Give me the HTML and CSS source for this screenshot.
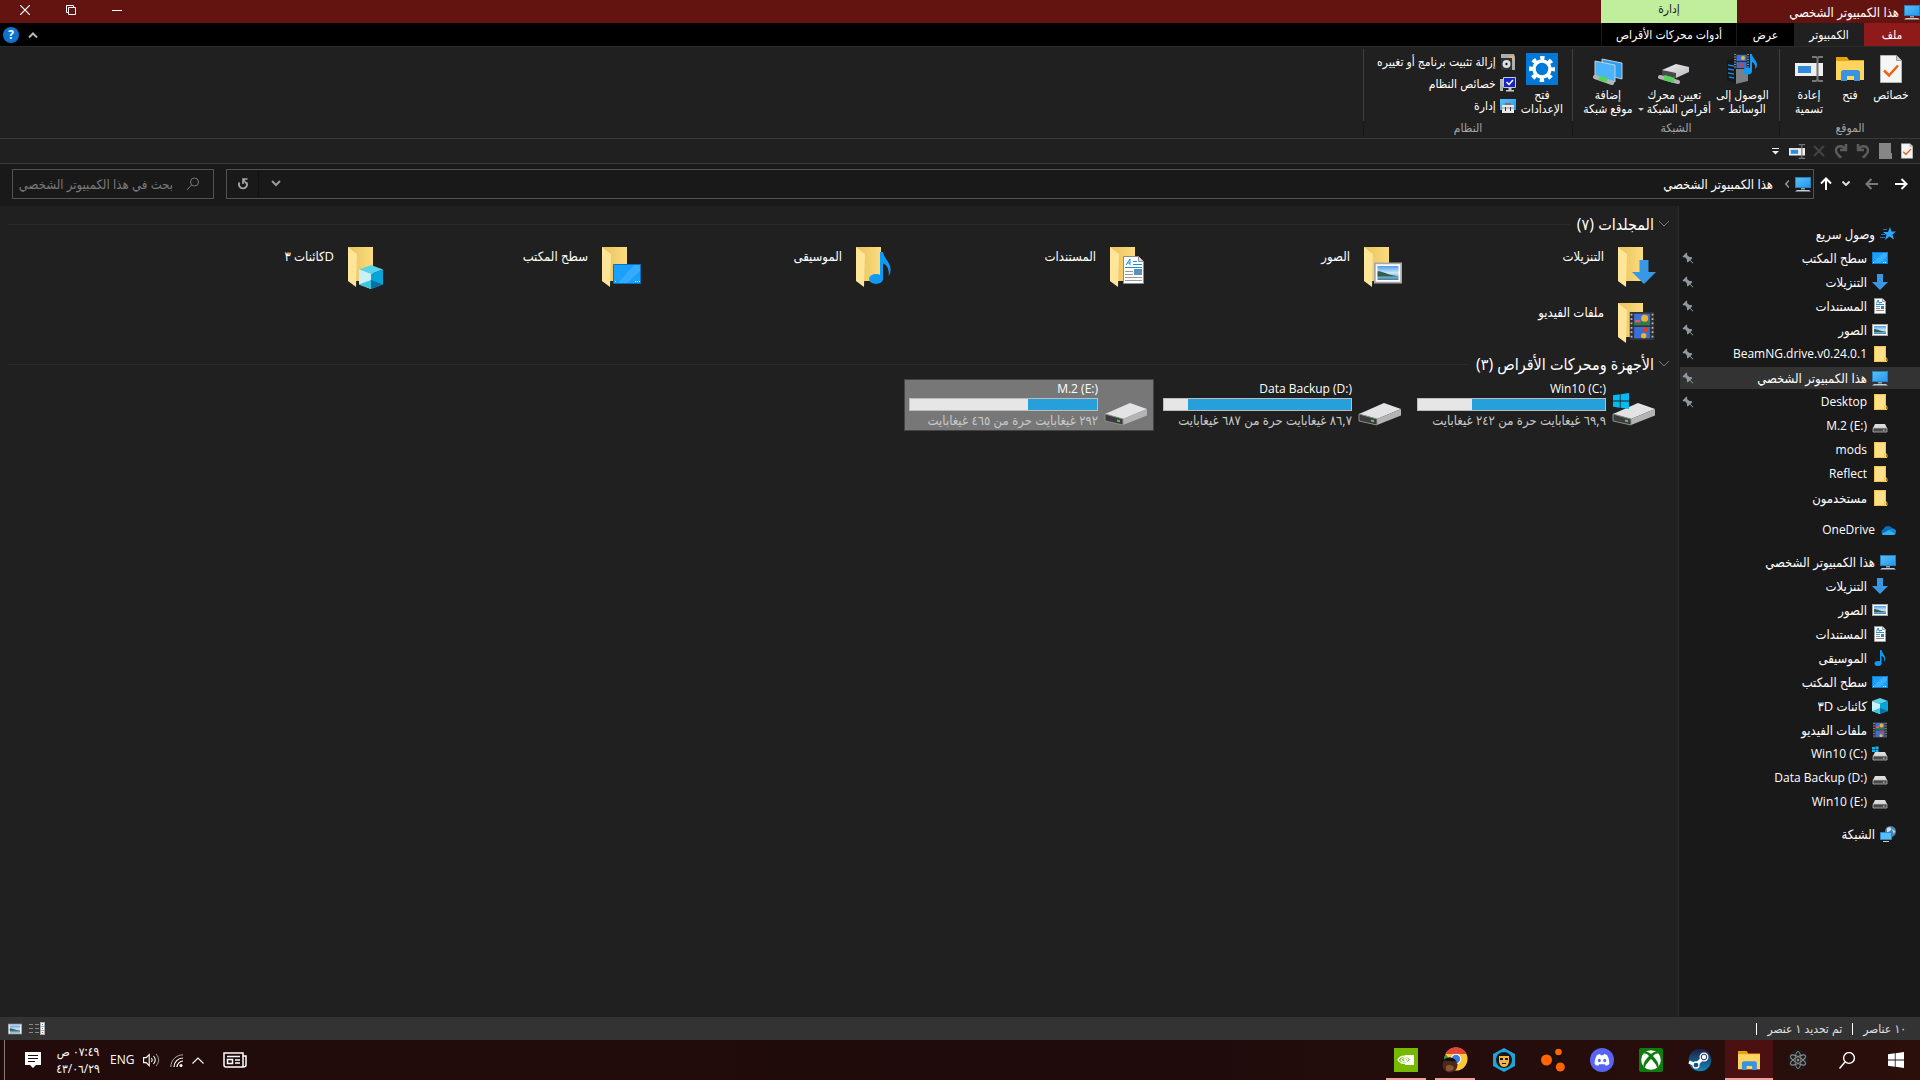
FILE: index.html
```
<!DOCTYPE html>
<html lang="ar" dir="rtl">
<head>
    <meta charset="UTF-8">
    <meta name="viewport" content="width=device-width, initial-scale=1.0">
    <title>هذا الكمبيوتر الشخصي</title>
    <link rel="stylesheet" href="styles.css">
</head>
<body>
    <!-- icon sprite -->
    <svg class="sprite" aria-hidden="true">
        <defs>
            <linearGradient id="screen" x1="0" y1="0" x2="1" y2="1">
                <stop offset="0" stop-color="#5cc0f8"/>
                <stop offset="1" stop-color="#2196ee"/>
            </linearGradient>
            <linearGradient id="sky" x1="0" y1="0" x2="0" y2="1">
                <stop offset="0" stop-color="#4d9df0"/>
                <stop offset="0.5" stop-color="#cfe8fa"/>
                <stop offset="1" stop-color="#3c7fa5"/>
            </linearGradient>
            <linearGradient id="gold" x1="0" y1="0" x2="1" y2="0">
                <stop offset="0" stop-color="#e9c25c"/>
                <stop offset="1" stop-color="#fbdc7f"/>
            </linearGradient>
            <linearGradient id="metal" x1="0" y1="0" x2="1" y2="1">
                <stop offset="0" stop-color="#f0f0f2"/>
                <stop offset="1" stop-color="#b9b9bc"/>
            </linearGradient>
            <linearGradient id="steam-bg" x1="0" y1="0" x2="0" y2="1">
                <stop offset="0" stop-color="#1b1f45"/>
                <stop offset="1" stop-color="#1585bd"/>
            </linearGradient>
        </defs>

        <symbol id="i-pc" viewBox="0 0 16 16">
            <rect x="0.5" y="1.5" width="15" height="10" fill="url(#screen)" stroke="#2a7fb8"/>
            <path d="M6 12h4v1.500H6z" fill="#8fa3b3"/>
            <path d="M2 14h12l2 1.500H0z" fill="#c3cdd6"/>
        </symbol>
        <symbol id="i-desktop" viewBox="0 0 16 16">
            <rect x="0.5" y="2.500" width="15" height="11" fill="#18a0fb" stroke="#0c7fd6"/>
            <path d="M1 13L11 3h4v3L8 13z" fill="#3aaefc"/>
            <path d="M1 12h1v1H1zM11 12h1v1h-1zM13 12h1v1h-1z" fill="#fff"/>
        </symbol>
        <symbol id="i-down" viewBox="0 0 16 16">
            <path d="M5 0h6v8h5l-8 8-8-8h5z" fill="#3798e5"/>
        </symbol>
        <symbol id="i-doc" viewBox="0 0 16 16">
            <path d="M2.500 0.500h8l3 3v12h-11z" fill="#fff" stroke="#9a9a9a"/>
            <path d="M10.500 0.500v3h3" fill="#ddd" stroke="#9a9a9a"/>
            <path d="M4 6.500h8M7.500 4.500H10" stroke="#1a8fe0"/>
            <path d="M4.500 5.500L6 2l1.500 3.500" fill="none" stroke="#1a8fe0"/>
            <path d="M4 8.500h4M4 10.500h4M4 12.500h8" stroke="#888"/>
            <path d="M9 8h3v3H9z" fill="#3c7fa5"/>
        </symbol>
        <symbol id="i-pic" viewBox="0 0 16 16">
            <rect x="0.5" y="2.500" width="15" height="11" fill="#fff" stroke="#a8a8a8"/>
            <rect x="2" y="4" width="12" height="8" fill="url(#sky)"/>
            <path d="M2 7c3 0 5 1.500 8 2.200L14 10H2z" fill="#2f5f4d"/>
        </symbol>
        <symbol id="i-folder" viewBox="0 0 16 16">
            <path d="M2 0h12v16H2z" fill="#ffe08a"/>
            <path d="M2.500 0.500h11v11l1.500 1v3H2.500z" fill="none" stroke="#f0c648"/>
            <path d="M12.500 11.500v4" stroke="#f0c648"/>
        </symbol>
        <symbol id="i-drive" viewBox="0 0 16 16">
            <path d="M3 6h10l2 4H1z" fill="#dcdcdc"/>
            <path d="M1 10h14v4H1z" fill="#4a4a4a" stroke="#b5b5b5" stroke-width="0.800"/>
            <path d="M11 11.500h1.500V13H11z" fill="#3fe06a"/>
        </symbol>
        <symbol id="i-drive-win" viewBox="0 0 16 16">
            <use href="#i-drive"/>
            <path d="M0 1h3v2H0zM3.500 .5h3v2.500h-3zM0 3.500h3v2.500H0zM3.500 3.500h3V6h-3z" fill="#12b5f0"/>
        </symbol>
        <symbol id="i-music" viewBox="0 0 16 16">
            <path d="M8 0h1.500c.3 3 3.800 5 3.800 9 0 1.500-.5 2.500-1 3 .5-3-.8-5.500-2.800-6.200v8H8z" fill="#0f9bf5"/>
            <ellipse cx="6" cy="13.500" rx="3.500" ry="2.500" fill="#0f9bf5"/>
        </symbol>
        <symbol id="i-cube" viewBox="0 0 16 16">
            <path d="M8 0l8 3-8 3-8-3z" fill="#58d3ea"/>
            <path d="M0 3l8 3v10l-8-3z" fill="#c9f1f5"/>
            <path d="M16 3L8 6v10l8-3z" fill="#08a5d8"/>
            <path d="M0 13l8-3v6z" fill="#3cc8dc"/>
            <path d="M16 13l-8-3v6z" fill="#0a6fa3"/>
        </symbol>
        <symbol id="i-film" viewBox="0 0 16 16">
            <path d="M1 0h14v16H1z" fill="#333"/>
            <path d="M3.500 1h9v6.500h-9zM3.500 8.500h9V15h-9z" fill="#3b6fd8"/>
            <path d="M3.500 5.500h9v2h-9z" fill="#2e7d44"/>
            <circle cx="9.500" cy="3.500" r="2" fill="#f0b429"/>
            <circle cx="10" cy="10" r="1.500" fill="#d8402b"/>
            <circle cx="9" cy="13.500" r="1.500" fill="#f0b429"/>
            <path d="M4 4.500h3v1.500H4z" fill="#e05a6a"/>
            <path d="M2 1v14M14 1v14" stroke="#bbb" stroke-dasharray="1 1.500"/>
        </symbol>
        <symbol id="i-star" viewBox="0 0 16 16">
            <path d="M10 1l1.500 4.500H16l-3.500 3 1.500 5-4.500-3L5 14l1.500-5L3 6h5z" fill="#2ea6f7"/>
            <path d="M3 3.500h4M1 8.500h4M0 11.500h5" stroke="#1878c4"/>
        </symbol>
        <symbol id="i-cloud" viewBox="0 0 16 16">
            <path d="M3.500 7a5 5 0 0 1 9-.5A4 4 0 0 1 16 10.500 3 3 0 0 1 13 13H3.500A3.200 3.200 0 0 1 3.500 7z" fill="#0f6cbd"/>
            <path d="M12.500 6.500A4 4 0 0 1 16 10.500L9 8z" fill="#1490df"/>
            <path d="M1.500 12L9 8l6.500 3.500A3 3 0 0 1 13 13H3.500z" fill="#2db3ea"/>
        </symbol>
        <symbol id="i-net" viewBox="0 0 16 16">
            <circle cx="10.500" cy="5.500" r="5.500" fill="#4a86b0"/>
            <path d="M7 2c3-2 5 0 4 2s-3 1-4 3zM12 3l3 2-1 3z" fill="#c5e2f2"/>
            <path d="M0.500 6.500h11v7h-11z" fill="#58bcf8" stroke="#2d87c4"/>
            <path d="M3 15.500h6" stroke="#c3cdd6"/>
        </symbol>
        <symbol id="i-pin" viewBox="0 0 12 12">
            <path d="M4.500.5L.5 4.500l1 1 1.500-.3 2 2.300-.2 2 1 1 2-2 3 3 .6-.6-3-3 2-2-1-1-2 .2L5 3l.3-1.500z" fill="#8f98a0"/>
        </symbol>
        <symbol id="i-winlogo" viewBox="0 0 16 16">
            <path d="M0 2.300L6.800 1.300v6.200H0zM7.600 1.200L16 0v7.500H7.600zM0 8.400h6.800v6.300L0 13.700zM7.600 8.400H16V16l-8.400-1.200z"/>
        </symbol>
        <symbol id="i-check-doc" viewBox="0 0 22 28">
            <path d="M.5.5h16l5 5v22H.5z" fill="#f6f6f6" stroke="#b5b5b5"/>
            <path d="M16.500.5v5h5" fill="#ccc" stroke="#999"/>
            <path d="M4 15.500l5 5 9-10" fill="none" stroke="#f2600c" stroke-width="2.500"/>
        </symbol>
        <symbol id="i-rename" viewBox="0 0 28 26">
            <path d="M0 7h28v13H0z" fill="#efefef"/>
            <path d="M3 10h13v7H3z" fill="#2f8bdc"/>
            <path d="M17 1h4l1.500 1L24 1h4M17 25h4l1.500-1 1.500 1h4M22.500 2v22" fill="none" stroke="#777" stroke-width="2"/>
        </symbol>
        <symbol id="i-explorer" viewBox="0 0 28 24">
            <path d="M0 0h11l2 3h15v20H0z" fill="#e5a50a"/>
            <path d="M0 4h28v19H0z" fill="#ffd560"/>
            <path d="M5 24V14.500L7 13h15l2 1.500V24h-6v-5h-7v5z" fill="#3893e0"/>
        </symbol>
        <symbol id="i-folder-back" viewBox="0 0 48 48">
            <path d="M8 4h25v34H8z" fill="url(#gold)"/>
            <path d="M8 4l9 7-1 33-8-6z" fill="#ffe598"/>
        </symbol>
        <symbol id="i-disk" viewBox="0 0 48 48">
            <path d="M3 34l25-11 17 6-24 10z" fill="#e3e3e6"/>
            <path d="M3 34l18 5v6L3 41z" fill="#3c3c3c"/>
            <path d="M21 39l24-10v6.500L21 45z" fill="#b4b4b6"/>
            <path d="M3 34l18 5v6L3 41z" fill="none" stroke="#8d8d8d"/>
            <path d="M15 39.500l3 .8v2l-3-.8z" fill="#37d84c"/>
        </symbol>
    </svg>

    <header class="titlebar">
        <div class="titlebar-text">
            <svg class="ic16"><use href="#i-pc"/></svg>
            <h1>هذا الكمبيوتر الشخصي</h1>
        </div>
        <div class="context-tab">إدارة</div>
        <div class="window-buttons">
            <button type="button" aria-label="تصغير"><svg width="10" height="10"><path d="M0 5.500h10" stroke="#fff"/></svg></button>
            <button type="button" aria-label="استعادة"><svg width="10" height="10" fill="none" stroke="#fff"><path d="M2.500 2.500h7v7h-7z"/><path d="M2 7.500H.5v-7h7V2"/></svg></button>
            <button type="button" aria-label="إغلاق"><svg width="10" height="10"><path d="M0 0l10 10M10 0L0 10" stroke="#fff" stroke-width="1.200"/></svg></button>
        </div>
    </header>

    <nav class="tabs">
        <button type="button" class="tab tab-file">ملف</button>
        <button type="button" class="tab tab-active">الكمبيوتر</button>
        <button type="button" class="tab tab-view">عرض</button>
        <button type="button" class="tab tab-tools">أدوات محركات الأقراص</button>
        <div class="tabs-end">
            <button type="button" aria-label="طي الشريط"><svg width="10" height="6"><path d="M1 5.500l4-4 4 4" fill="none" stroke="#b5b5b5" stroke-width="2"/></svg></button>
            <button type="button" class="help" aria-label="تعليمات">?</button>
        </div>
    </nav>

    <section class="ribbon">
        <div class="group group-location">
            <div class="group-items">
                <button type="button" class="big">
                    <span class="big-icon"><svg width="22" height="28"><use href="#i-check-doc"/></svg></span>
                    <span>خصائص</span>
                </button>
                <button type="button" class="big">
                    <span class="big-icon"><svg width="28" height="24"><use href="#i-explorer"/></svg></span>
                    <span>فتح</span>
                </button>
                <button type="button" class="big">
                    <span class="big-icon"><svg width="28" height="26"><use href="#i-rename"/></svg></span>
                    <span>إعادة<br>تسمية</span>
                </button>
            </div>
            <div class="group-label">الموقع</div>
        </div>

        <div class="group group-network">
            <div class="group-items">
                <button type="button" class="big">
                    <span class="big-icon">
                        <svg width="32" height="32" viewBox="0 0 32 32">
                            <path d="M1 8l8-4 4 2v25L1 28z" fill="#15181c"/>
                            <path d="M10 8h12v20l-12 3z" fill="#7c8085"/>
                            <path d="M2 12l6 1M2 16l6 1M2 20l6 1M3 24l5 1" stroke="#1c7fd0" stroke-width="1.500"/>
                            <path d="M8 1h15v15H8z" fill="#2b2b2b"/>
                            <path d="M10.500 2h10v6h-10zM10.500 9h10v6h-10z" fill="#3b6fd8"/>
                            <path d="M9 1v15M22 1v15" stroke="#ddd" stroke-dasharray="1 1.500"/>
                            <circle cx="17" cy="5" r="2" fill="#f0b429"/><circle cx="15" cy="12" r="2" fill="#d8402b"/>
                            <path d="M24 1h2c0 4 5 6 5 11 0 2-1 3-2 4 1-4-1-6-3-7v9h-2z" fill="#0f9bf5"/><ellipse cx="21.500" cy="18" rx="4.500" ry="3.500" fill="#0f9bf5"/>
                        </svg>
                    </span>
                    <span>الوصول إلى<br>الوسائط <i class="caret"></i></span>
                </button>
                <button type="button" class="big">
                    <span class="big-icon">
                        <svg width="32" height="32" viewBox="0 0 32 32">
                            <path d="M4 17l14-6 13 3v5l-13 6-14-3z" fill="url(#metal)"/>
                            <path d="M4 17l14 3v5l-14-3z" fill="#4a4a4a"/>
                            <path d="M2 24l18 5" stroke="#b5b5b5" stroke-width="4" stroke-linecap="round"/>
                            <path d="M6 24.500l10 3" stroke="#54d45c" stroke-width="5"/>
                        </svg>
                    </span>
                    <span>تعيين محرك<br>أقراص الشبكة <i class="caret"></i></span>
                </button>
                <button type="button" class="big">
                    <span class="big-icon">
                        <svg width="32" height="32" viewBox="0 0 32 32">
                            <path d="M10 6l20 4v16l-20-5z" fill="#2d9fee" stroke="#c6ced4"/>
                            <path d="M3 8l20 4v17L3 23z" fill="#4bb4fa" stroke="#c6ced4"/>
                            <path d="M3 24l17 6" stroke="#b5b5b5" stroke-width="4" stroke-linecap="round"/>
                            <path d="M7 24.500l8 3" stroke="#54d45c" stroke-width="5"/>
                        </svg>
                    </span>
                    <span>إضافة<br>موقع شبكة</span>
                </button>
            </div>
            <div class="group-label">الشبكة</div>
        </div>

        <div class="group group-system">
            <div class="group-items">
                <button type="button" class="big">
                    <span class="big-icon">
                        <svg width="32" height="32" viewBox="0 0 32 32">
                            <path d="M0 0h32v32H0z" fill="#0078d7"/>
                            <circle cx="16" cy="16" r="8" fill="none" stroke="#fff" stroke-width="3.500"/>
                            <circle cx="16" cy="16" r="11" fill="none" stroke="#fff" stroke-width="4" stroke-dasharray="4.320" stroke-dashoffset="2.160"/>
                        </svg>
                    </span>
                    <span>فتح<br>الإعدادات</span>
                </button>
                <div class="small-list">
                    <button type="button" class="small">
                        <svg class="ic16" viewBox="0 0 16 16"><path d="M1 0h13l1 3v13H4V4H1z" fill="#a9aeb0"/><path d="M9 2h5v6z" fill="#f0b25a"/><path d="M1 4h11v12H1z" fill="#2f3335"/><circle cx="6.500" cy="10" r="4" fill="#dcdfe0"/><circle cx="6.500" cy="10" r="1.200" fill="#222"/></svg>
                        <span>إزالة تثبيت برنامج أو تغييره</span>
                    </button>
                    <button type="button" class="small">
                        <svg class="ic16" viewBox="0 0 16 16"><path d="M0 3h3v12H0z" fill="#b8b8b8"/><path d="M1 10h1.500v3H1z" fill="#6fd04a"/><path d="M3.500 1.500h12v10h-12z" fill="#1524c4" stroke="#c9c9c9"/><path d="M6.500 6l2.500 2.500L13 4" fill="none" stroke="#fff" stroke-width="1.500"/><path d="M6 14h8v1.500H6zM8.500 12h3v2h-3z" fill="#c9c9c9"/></svg>
                        <span>خصائص النظام</span>
                    </button>
                    <button type="button" class="small">
                        <svg class="ic16" viewBox="0 0 16 16"><path d="M0 1h16v11H0z" fill="url(#screen)"/><path d="M5 5h6v3H5z" fill="#777"/><path d="M2 7h12v8H2z" fill="#e8e8e8"/><path d="M2 10h12" stroke="#999"/><path d="M5 9h1v4H5zM10 9h1v4h-1z" fill="#333"/></svg>
                        <span>إدارة</span>
                    </button>
                </div>
            </div>
            <div class="group-label">النظام</div>
        </div>
    </section>

    <div class="quickbar">
        <button type="button" aria-label="خصائص"><svg width="12" height="16"><use href="#i-check-doc"/></svg></button>
        <button type="button" aria-label="مجلد جديد"><svg width="13" height="16"><path d="M0 0h12v10h1v6H0z" fill="#868686"/></svg></button>
        <button type="button" aria-label="تراجع"><svg width="14" height="14"><path d="M2 0v6h6M2.500 5.500C5 1 12 1 12 7c0 3-3 4-5 7" fill="none" stroke="#5c5c5c" stroke-width="2.500"/></svg></button>
        <button type="button" aria-label="إعادة"><svg width="14" height="14"><path d="M12 0v6H6M11.500 5.500C9 1 2 1 2 7c0 3 3 4 5 7" fill="none" stroke="#5c5c5c" stroke-width="2.500"/></svg></button>
        <button type="button" aria-label="حذف"><svg width="12" height="12"><path d="M1 1l10 10M11 1L1 11" stroke="#444" stroke-width="2"/></svg></button>
        <button type="button" aria-label="إعادة تسمية"><svg width="16" height="15"><use href="#i-rename"/></svg></button>
        <button type="button" aria-label="تخصيص"><svg width="7" height="7"><path d="M0 .5h7" stroke="#eee"/><path d="M0 3h7L3.500 6.500z" fill="#eee"/></svg></button>
    </div>

    <div class="addressbar">
        <div class="history">
            <button type="button" aria-label="السابق"><svg width="13" height="12"><path d="M0 6h11M6.500 1l5 5-5 5" fill="none" stroke="#fff" stroke-width="2"/></svg></button>
            <button type="button" aria-label="التالي"><svg width="13" height="12"><path d="M13 6H2M6.500 1l-5 5 5 5" fill="none" stroke="#7a7a7a" stroke-width="2"/></svg></button>
            <button type="button" aria-label="الأخيرة" class="narrow"><svg width="8" height="5"><path d="M.5.5L4 4 7.500.5" fill="none" stroke="#ddd" stroke-width="2"/></svg></button>
            <button type="button" aria-label="أعلى" class="narrow"><svg width="12" height="13"><path d="M6 13V2M1 6.500l5-5 5 5" fill="none" stroke="#fff" stroke-width="2"/></svg></button>
        </div>
        <div class="path">
            <svg class="ic16"><use href="#i-pc"/></svg>
            <svg class="crumb" width="4" height="8"><path d="M4 .5L.8 4 4 7.500" fill="none" stroke="#999" stroke-width="1.500"/></svg>
            <a href="#">هذا الكمبيوتر الشخصي</a>
            <button type="button" class="path-drop" aria-label="المواقع السابقة"><svg width="10" height="7"><path d="M1 1l4 4 4-4" fill="none" stroke="#999" stroke-width="2"/></svg></button>
            <button type="button" class="path-refresh" aria-label="تحديث"><svg width="10" height="12"><path d="M1.500 4.500a4 4 0 1 0 7 0" fill="none" stroke="#aaa" stroke-width="1.800"/><path d="M9.500 1H5v5M5 1.500l3.500 4" fill="none" stroke="#aaa" stroke-width="1.600"/></svg></button>
        </div>
        <label class="search">
            <svg width="14" height="14"><circle cx="8.500" cy="5" r="4" fill="none" stroke="#777"/><path d="M5.500 8L1 13" stroke="#777"/></svg>
            <input type="text" placeholder="بحث في هذا الكمبيوتر الشخصي" aria-label="بحث في هذا الكمبيوتر الشخصي">
        </label>
    </div>

    <div class="workspace">
        <aside class="tree">
            <ul>
                <li class="root"><a href="#"><svg class="ic16"><use href="#i-star"/></svg><span>وصول سريع</span></a></li>
                <li><a href="#"><svg class="ic16"><use href="#i-desktop"/></svg><span>سطح المكتب</span><svg class="pin"><use href="#i-pin"/></svg></a></li>
                <li><a href="#"><svg class="ic16"><use href="#i-down"/></svg><span>التنزيلات</span><svg class="pin"><use href="#i-pin"/></svg></a></li>
                <li><a href="#"><svg class="ic16"><use href="#i-doc"/></svg><span>المستندات</span><svg class="pin"><use href="#i-pin"/></svg></a></li>
                <li><a href="#"><svg class="ic16"><use href="#i-pic"/></svg><span>الصور</span><svg class="pin"><use href="#i-pin"/></svg></a></li>
                <li><a href="#"><svg class="ic16"><use href="#i-folder"/></svg><span dir="ltr">BeamNG.drive.v0.24.0.1</span><svg class="pin"><use href="#i-pin"/></svg></a></li>
                <li class="current"><a href="#"><svg class="ic16"><use href="#i-pc"/></svg><span>هذا الكمبيوتر الشخصي</span><svg class="pin"><use href="#i-pin"/></svg></a></li>
                <li><a href="#"><svg class="ic16"><use href="#i-folder"/></svg><span dir="ltr">Desktop</span><svg class="pin"><use href="#i-pin"/></svg></a></li>
                <li><a href="#"><svg class="ic16"><use href="#i-drive"/></svg><span dir="ltr">M.2 (E:)</span></a></li>
                <li><a href="#"><svg class="ic16"><use href="#i-folder"/></svg><span dir="ltr">mods</span></a></li>
                <li><a href="#"><svg class="ic16"><use href="#i-folder"/></svg><span dir="ltr">Reflect</span></a></li>
                <li><a href="#"><svg class="ic16"><use href="#i-folder"/></svg><span>مستخدمون</span></a></li>
            </ul>
            <ul>
                <li class="root"><a href="#"><svg class="ic16"><use href="#i-cloud"/></svg><span dir="ltr">OneDrive</span></a></li>
            </ul>
            <ul>
                <li class="root"><a href="#"><svg class="ic16"><use href="#i-pc"/></svg><span>هذا الكمبيوتر الشخصي</span></a></li>
                <li><a href="#"><svg class="ic16"><use href="#i-down"/></svg><span>التنزيلات</span></a></li>
                <li><a href="#"><svg class="ic16"><use href="#i-pic"/></svg><span>الصور</span></a></li>
                <li><a href="#"><svg class="ic16"><use href="#i-doc"/></svg><span>المستندات</span></a></li>
                <li><a href="#"><svg class="ic16"><use href="#i-music"/></svg><span>الموسيقى</span></a></li>
                <li><a href="#"><svg class="ic16"><use href="#i-desktop"/></svg><span>سطح المكتب</span></a></li>
                <li><a href="#"><svg class="ic16"><use href="#i-cube"/></svg><span>كائنات ٣D</span></a></li>
                <li><a href="#"><svg class="ic16"><use href="#i-film"/></svg><span>ملفات الفيديو</span></a></li>
                <li><a href="#"><svg class="ic16"><use href="#i-drive-win"/></svg><span dir="ltr">Win10 (C:)</span></a></li>
                <li><a href="#"><svg class="ic16"><use href="#i-drive"/></svg><span dir="ltr">Data Backup (D:)</span></a></li>
                <li><a href="#"><svg class="ic16"><use href="#i-drive"/></svg><span dir="ltr">Win10 (E:)</span></a></li>
            </ul>
            <ul>
                <li class="root"><a href="#"><svg class="ic16"><use href="#i-net"/></svg><span>الشبكة</span></a></li>
            </ul>
        </aside>

        <main class="files">
            <h2><svg width="12" height="8"><path d="M1 1l5 5 5-5" fill="none" stroke="#777"/></svg><span>المجلدات (٧)</span></h2>
            <div class="tiles">
                <a href="#" class="tile folder">
                    <svg class="ic48"><use href="#i-folder-back"/><use href="#i-down" x="22" y="17" width="24" height="24"/></svg>
                    <span class="name">التنزيلات</span>
                </a>
                <a href="#" class="tile folder">
                    <svg class="ic48"><use href="#i-folder-back"/><use href="#i-pic" x="18" y="16" width="28" height="28"/></svg>
                    <span class="name">الصور</span>
                </a>
                <a href="#" class="tile folder">
                    <svg class="ic48"><use href="#i-folder-back"/>
                        <path d="M21.500 13.500h15l5 5v22h-20z" fill="#fff" stroke="#8c8c8c"/><path d="M36.500 13.500v5h5" fill="#ddd" stroke="#8c8c8c"/>
                        <path d="M24 22l4-6v6M25 20h3M31 18.500h4M31 21.500h9M23 24.500h17" fill="none" stroke="#1a8fe0"/>
                        <path d="M23 28.500h8M23 31.500h8M23 34.500h17M23 37.500h17" stroke="#999"/><path d="M32 26h8v6h-8z" fill="#5b93b8"/>
                    </svg>
                    <span class="name">المستندات</span>
                </a>
                <a href="#" class="tile folder">
                    <svg class="ic48"><use href="#i-folder-back"/><use href="#i-music" x="16" y="9" width="32" height="32"/></svg>
                    <span class="name">الموسيقى</span>
                </a>
                <a href="#" class="tile folder">
                    <svg class="ic48"><use href="#i-folder-back"/>
                        <path d="M19.500 21.500h27v19h-27z" fill="#18a0fb" stroke="#0c6fbd"/><path d="M24 40l16-18h6v6L33 40z" fill="#35abfc"/>
                        <path d="M21 38h1v1h-1zM41 38h1v1h-1zM43 38h1v1h-1zM45 38h1v1h-1z" fill="#fff"/>
                    </svg>
                    <span class="name">سطح المكتب</span>
                </a>
                <a href="#" class="tile folder">
                    <svg class="ic48"><use href="#i-folder-back"/><use href="#i-cube" x="19" y="22" width="24" height="24"/></svg>
                    <span class="name">Dكائنات ٣</span>
                </a>
                <a href="#" class="tile folder">
                    <svg class="ic48"><use href="#i-folder-back"/><use href="#i-film" x="18" y="13" width="28" height="28"/></svg>
                    <span class="name">ملفات الفيديو</span>
                </a>
            </div>

            <h2><svg width="12" height="8"><path d="M1 1l5 5 5-5" fill="none" stroke="#777"/></svg><span>الأجهزة ومحركات الأقراص (٣)</span></h2>
            <div class="tiles">
                <a href="#" class="tile">
                    <svg class="ic48"><use href="#i-disk"/><use href="#i-winlogo" x="3" y="13" width="16" height="16" fill="#00bcf2"/></svg>
                    <span class="drive-info">
                        <span class="name" dir="ltr">Win10 (C:)</span>
                        <span class="bar"><span class="used" style="width: 71%"></span></span>
                        <span class="free">٦٩,٩ غيغابايت حرة من ٢٤٢ غيغابايت</span>
                    </span>
                </a>
                <a href="#" class="tile">
                    <svg class="ic48"><use href="#i-disk"/></svg>
                    <span class="drive-info">
                        <span class="name" dir="ltr">Data Backup (D:)</span>
                        <span class="bar"><span class="used" style="width: 87%"></span></span>
                        <span class="free">٨٦,٧ غيغابايت حرة من ٦٨٧ غيغابايت</span>
                    </span>
                </a>
                <a href="#" class="tile selected">
                    <svg class="ic48"><use href="#i-disk"/></svg>
                    <span class="drive-info">
                        <span class="name" dir="ltr">M.2 (E:)</span>
                        <span class="bar"><span class="used" style="width: 37%"></span></span>
                        <span class="free">٢٩٢ غيغابايت حرة من ٤٦٥ غيغابايت</span>
                    </span>
                </a>
            </div>
        </main>
    </div>

    <footer class="statusbar">
        <span class="status-item">١٠ عناصر</span>
        <span class="status-item">تم تحديد ١ عنصر</span>
        <div class="views">
            <button type="button" aria-label="تفاصيل"><svg width="16" height="13"><path d="M0 2.500h4M6 2.500h4M0 6.500h4M6 6.500h4M0 10.500h4M6 10.500h4" stroke="#888"/><path d="M11 0h5v13h-5z" fill="#aaa"/><path d="M12 1h3v3h-3zM12 5h3v3h-3zM12 9h3v3h-3z" fill="#fff"/><path d="M13 2h1v1h-1zM13 6h1v1h-1z" fill="#38c"/><path d="M13 10h1v1h-1z" fill="#d33"/></svg></button>
            <button type="button" aria-label="رموز كبيرة"><svg width="14" height="14"><use href="#i-pic"/></svg></button>
        </div>
    </footer>

    <div class="taskbar">
        <div class="apps">
            <button type="button" class="app" aria-label="ابدأ"><svg width="16" height="16" fill="#fff"><use href="#i-winlogo"/></svg></button>
            <button type="button" class="app" aria-label="بحث"><svg width="16" height="17"><circle cx="10" cy="6" r="5.400" fill="none" stroke="#fff" stroke-width="1.400"/><path d="M6 10L.5 16.500" stroke="#fff" stroke-width="1.400"/></svg></button>
            <button type="button" class="app" aria-label="Atom">
                <svg width="22" height="22" viewBox="0 0 22 22" fill="none" stroke="#8a8a8a"><circle cx="11" cy="11" r="10.500" fill="#1c1b1b" stroke="none"/><ellipse cx="11" cy="11" rx="3" ry="8.500"/><ellipse cx="11" cy="11" rx="3" ry="8.500" transform="rotate(60 11 11)"/><ellipse cx="11" cy="11" rx="3" ry="8.500" transform="rotate(120 11 11)"/><circle cx="11" cy="11" r="1" fill="#ccc"/></svg>
            </button>
            <button type="button" class="app open active" aria-label="مستكشف الملفات"><svg width="22" height="19"><use href="#i-explorer"/></svg></button>
            <button type="button" class="app" aria-label="Steam">
                <svg width="24" height="24" viewBox="0 0 24 24"><circle cx="12" cy="12" r="11.300" fill="url(#steam-bg)"/><path d="M1 14l7 3 7-7" fill="none" stroke="#fff" stroke-width="3.500"/><circle cx="16" cy="9" r="4.500" fill="#fff"/><circle cx="16" cy="9" r="2.800" fill="none" stroke="#1b2f55"/><circle cx="8" cy="17" r="3" fill="#1b4f80" stroke="#fff" stroke-width="1.300"/></svg>
            </button>
            <button type="button" class="app" aria-label="Xbox">
                <svg width="24" height="24" viewBox="0 0 24 24"><rect width="24" height="24" rx="2" fill="#107c10"/><circle cx="12" cy="12" r="9.800" fill="#fff"/><path d="M6 3.500C9 3.500 11 5 12 6c1-1 3-2.500 6-2.500l1.500 2C17 5 15 6.500 14 8c3 3 6 7 5.500 10.500L18 20c0-3-4-7-6-9-2 2-6 6-6 9l-1.500-1.500C4 15 7 11 10 8 9 6.500 7 5 4.500 5.500z" fill="#107c10"/></svg>
            </button>
            <button type="button" class="app" aria-label="Discord">
                <svg width="24" height="24" viewBox="0 0 24 24"><circle cx="12" cy="12" r="12" fill="#5865f2"/><path d="M7 7l3-1 .7 1.200h2.600L14 6l3 1c1.800 3 2.500 6 2.300 9-1 1-2.300 1.500-3.500 1.800l-1-1.600H9.200l-1 1.600C7 17.500 5.700 17 4.700 16 4.500 13 5.200 10 7 7z" fill="#fff"/><ellipse cx="9.300" cy="12.500" rx="1.500" ry="1.700" fill="#5865f2"/><ellipse cx="14.700" cy="12.500" rx="1.500" ry="1.700" fill="#5865f2"/></svg>
            </button>
            <button type="button" class="app" aria-label="BeamNG">
                <svg width="24" height="24" viewBox="0 0 24 24"><path d="M6 12l12-8 1 14z" fill="none" stroke="#111" stroke-width="2.500"/><circle cx="5.500" cy="12" r="5.500" fill="#ff6500"/><circle cx="17.500" cy="4" r="3.300" fill="#ff6500"/><circle cx="19.300" cy="19" r="4.500" fill="#ff6500"/></svg>
            </button>
            <button type="button" class="app" aria-label="Game">
                <svg width="22" height="24" viewBox="0 0 22 24"><path d="M11 0l11 6v12l-11 6L0 18V6z" fill="#1fa3dd"/><circle cx="11" cy="12" r="8" fill="#161616"/><path d="M6 8h10v5c0 3-2 6-5 6s-5-3-5-6z" fill="#f2b544"/><path d="M7 10h3v2H7zM12 10h3v2h-3zM9 15h4v1H9z" fill="#1a1a1a"/></svg>
            </button>
            <button type="button" class="app open" aria-label="Chrome">
                <svg width="26" height="26" viewBox="0 0 26 26"><circle cx="14" cy="12" r="11.500" fill="#fbc934"/><path d="M3.500 7A11.500 11.500 0 0 1 24.500 7H14z" fill="#e2463a"/><path d="M3.500 7A11.500 11.500 0 0 0 12 23.300L17 15 9 14z" fill="#2ba24c"/><circle cx="14" cy="12" r="5.300" fill="#fff"/><circle cx="14" cy="12" r="4.200" fill="#3b7de8"/><circle cx="8" cy="18" r="7.500" fill="#4a2a1c"/><path d="M1 14c4-5 10-4 13 0-4 1-8-1-13 0z" fill="#120c0a"/><path d="M4 19c3-2 7-1 8 2-2 4-6 4-8 2z" fill="#8a5537"/></svg>
            </button>
            <button type="button" class="app open" aria-label="NVIDIA">
                <svg width="24" height="24" viewBox="0 0 24 24"><path d="M0 0h24v24H0z" fill="#76b900"/><path d="M11 7h9v10h-9z" fill="#fff"/><path d="M4 12c3-5 9-5 13-.5-4 5-10 5-13 .5z" fill="#76b900" stroke="#fff" stroke-width="1.300"/><path d="M7 12c2-3 5-3 7-.5-2 3-5 3-7 .5z" fill="none" stroke="#fff" stroke-width="1.300"/><circle cx="11" cy="11.800" r="1.300" fill="#fff"/></svg>
            </button>
        </div>

        <div class="tray">
            <button type="button" class="news" aria-label="الأخبار"><svg width="24" height="16" fill="none" stroke="#fff" stroke-width="1.500"><path d="M1 1h19v14H3c-1.500 0-2-1-2-2zM20 4h3v9c0 1.500-1 2-3 2"/><path d="M4 4.500h13M12 8h5M12 11h5"/><path d="M4.500 7.500h5v4h-5z"/></svg></button>
            <button type="button" aria-label="إظهار الرموز المخفية"><svg width="12" height="7"><path d="M.5 6.500L6 1l5.500 5.500" fill="none" stroke="#fff" stroke-width="1.200"/></svg></button>
            <button type="button" aria-label="الشبكة"><svg width="13" height="13" fill="none"><path d="M.8 13C1 6 6 1 13 .8" stroke="#aaa"/><path d="M4 13c0-5 4-9 9-9M7 13c0-3 3-6 6-6" stroke="#fff" stroke-width="1.200"/><circle cx="11" cy="11.500" r="1.500" fill="#fff"/></svg></button>
            <button type="button" aria-label="الصوت"><svg width="18" height="14" fill="none" stroke="#fff" stroke-width="1.100"><path d="M.6 4.600h2.600l3-3v11l-3-3H.6zM8.500 5q1.500 2 0 4M10.500 3q3.500 4 0 8"/><path d="M13 1q5.500 6 0 12" stroke="#888"/></svg></button>
            <button type="button" dir="ltr">ENG</button>
            <button type="button" class="clock"><span>٠٧:٤٩ ص</span><span>٤٣/٠٦/٢٩</span></button>
            <button type="button" class="notify" aria-label="الإعلامات"><svg width="16" height="16"><path d="M0 0h16v13h-5l-3 3-3-3H0z" fill="#fff"/><path d="M3 3.500h10M3 6.500h10M3 9.500h7" stroke="#240c0c"/></svg></button>
            <button type="button" class="show-desktop" aria-label="إظهار سطح المكتب"></button>
        </div>
    </div>
</body>
</html>
```
FILE: styles.css
```
:root {
    --pane: #191919;
    --panel: #202020;
    --line: #2b2b2b;
    --title: #641410;
    --text: #fff;
}

* {
    box-sizing: border-box;
}

body {
    margin: 0;
    height: 100vh;
    display: flex;
    flex-direction: column;
    overflow: hidden;
    background: var(--panel);
    color: var(--text);
    font-family: 'Open Sans', 'DejaVu Sans Condensed', 'DejaVu Sans', sans-serif;
    font-size: 13px;
    line-height: 18px;
}

button {
    padding: 0;
    border: none;
    background: none;
    color: inherit;
    font: inherit;
    display: flex;
    align-items: center;
    justify-content: center;
}

a {
    color: inherit;
    text-decoration: none;
}

svg {
    display: block;
    flex: none;
}

/* latin labels run wider than the arabic ones */
[dir='ltr'] {
    font-size: 12px;
}

.sprite {
    position: absolute;
    width: 0;
    height: 0;
}

.ic16 {
    width: 16px;
    height: 16px;
}

.ic48 {
    width: 48px;
    height: 48px;
}

/* title bar */
.titlebar {
    display: flex;
    height: 23px;
    flex: none;
    background: var(--title);
}

.titlebar-text {
    display: flex;
    align-items: center;
    gap: 5px;
    width: 183px;
}

.titlebar h1 {
    margin: 0;
    font-size: 13px;
    font-weight: normal;
    white-space: nowrap;
}

.context-tab {
    width: 136px;
    background: #c1ee9d;
    color: #222;
    text-align: center;
    font-size: 12px;
}

.window-buttons {
    display: flex;
    margin-right: auto;
    padding-left: 2px;
}

.window-buttons button {
    width: 46px;
    height: 20px;
}

/* ribbon tabs */
.tabs {
    display: flex;
    height: 23px;
    flex: none;
    background: #000;
}

.tab {
    font-size: 12px;
    white-space: nowrap;
}

.tab-file {
    width: 56px;
    background: #8f1a1a;
}

.tab-active {
    width: 70px;
    background: var(--panel);
}

.tab-view {
    width: 57px;
}

.tab-tools {
    width: 136px;
    border: solid #1a1a1a;
    border-width: 0 1px;
}

.tabs-end {
    display: flex;
    align-items: center;
    gap: 9px;
    margin-right: auto;
    padding-left: 3px;
}

.help {
    width: 16px;
    height: 16px;
    border-radius: 50%;
    background: #0e74d1;
    font-size: 12px;
    font-weight: bold;
}

/* ribbon */
.ribbon {
    display: flex;
    height: 93px;
    flex: none;
    border-top: 1px solid var(--line);
    border-bottom: 1px solid #383838;
    font-size: 12px;
    line-height: 14px;
}

.group {
    display: flex;
    flex-direction: column;
    margin: 2px 0;
    border-left: 1px solid;
    border-image: linear-gradient(#404040 82%, #181818 82%) 1;
}

.group-location {
    width: 141px;
}

.group-network {
    width: 207px;
}

.group-system {
    width: 209px;
}

.group-items {
    display: flex;
    justify-content: center;
    gap: 5px;
    flex: 1;
    padding: 2px 6px 0;
}

.group-system .group-items {
    padding-right: 9px;
}

.group-label {
    height: 16px;
    line-height: 16px;
    text-align: center;
    color: #a5a5a5;
}

.big {
    flex-direction: column;
    justify-content: flex-start;
    min-width: 36px;
    white-space: nowrap;
}

.big-icon {
    display: flex;
    align-items: center;
    justify-content: center;
    height: 36px;
    margin-bottom: 1px;
}

.caret {
    display: inline-block;
    border: 3px solid transparent;
    border-top-color: #ccc;
    border-bottom: 0;
    vertical-align: middle;
}

.small-list {
    display: flex;
    flex-direction: column;
    flex: 1;
}

.small {
    justify-content: flex-start;
    gap: 4px;
    height: 22px;
    white-space: nowrap;
}

/* quick access bar */
.quickbar {
    display: flex;
    align-items: center;
    height: 25px;
    flex: none;
    padding-right: 2px;
    border-bottom: 1px solid #3a3a3a;
}

.quickbar button {
    width: 22px;
    height: 22px;
}

/* address bar */
.addressbar {
    display: flex;
    align-items: center;
    height: 42px;
    flex: none;
    padding: 0 4px 3px 12px;
    background: var(--pane);
}

.history {
    display: flex;
    padding-left: 2px;
}

.history button {
    width: 30px;
    height: 30px;
}

.history .narrow {
    width: 20px;
}

.path {
    display: flex;
    align-items: center;
    flex: 1;
    height: 30px;
    border: 1px solid #535353;
    padding-right: 2px;
}

.crumb {
    margin: 0 6px 0 12px;
}

.path-drop {
    width: 34px;
    height: 28px;
    margin-right: auto;
    border-left: 1px solid #111;
}

.path-refresh {
    width: 31px;
    height: 28px;
}

.search {
    display: flex;
    align-items: center;
    gap: 13px;
    width: 202px;
    height: 30px;
    margin-right: 12px;
    padding: 0 13px 0 2px;
    border: 1px solid #535353;
}

.search input {
    flex: 1;
    min-width: 0;
    padding: 0;
    border: none;
    outline: none;
    background: none;
    color: #fff;
    font: inherit;
}

.search input::placeholder {
    color: #7a7a7a;
}

/* workspace */
.workspace {
    display: flex;
    flex: 1;
    min-height: 0;
}

.tree {
    width: 242px;
    flex: none;
    padding: 16px 0 0 1px;
    background: var(--pane);
    border-left: 1px solid var(--line);
}

.tree ul {
    margin: 0 0 8px;
    padding: 0;
    list-style: none;
}

.tree li {
    height: 24px;
    padding: 1px 0;
}

.tree a {
    display: flex;
    align-items: center;
    gap: 5px;
    height: 22px;
    padding: 0 32px 0 2px;
}

.tree .root a {
    padding-right: 24px;
}

.tree .current a {
    background: #333;
}

.pin {
    width: 12px;
    height: 12px;
    margin-right: auto;
}

.files {
    flex: 1;
    padding: 6px 8px 0;
}

.files h2 {
    display: flex;
    align-items: center;
    gap: 4px;
    height: 24px;
    margin: 0 0 3px;
    font-size: 16px;
    font-weight: normal;
}

.files h2::after {
    content: '';
    flex: 1;
    height: 1px;
    margin-right: 3px;
    background: var(--line);
}

.tiles {
    display: flex;
    flex-wrap: wrap;
    gap: 2px 4px;
    margin-bottom: 3px;
    padding-right: 8px;
}

.tile {
    display: flex;
    gap: 4px;
    width: 250px;
    height: 52px;
    padding: 0 3px;
    border: 1px solid transparent;
}

.tile.folder {
    height: 54px;
    gap: 6px;
    padding-top: 3px;
}

.folder .name {
    padding-top: 4px;
}

.selected {
    background: #777;
    border-color: #444;
}

.drive-info {
    display: flex;
    flex-direction: column;
    width: 189px;
}

.drive-info .name {
    text-align: right;
}

.bar {
    display: flex;
    height: 13px;
    flex: none;
    background: #e6e6e6;
    border: 1px solid #bcbcbc;
}

.used {
    background: #26a0da;
}

.free {
    color: #c8c8c8;
    white-space: nowrap;
}

/* status bar */
.statusbar {
    display: flex;
    align-items: center;
    height: 23px;
    flex: none;
    padding: 0 14px 0 8px;
    background: #333;
    color: #e0e0e0;
    font-size: 12px;
}

.status-item {
    padding-left: 10px;
    margin-left: 10px;
    border-left: 1px solid #fff;
    line-height: 12px;
}

.views {
    display: flex;
    gap: 7px;
    margin-right: auto;
}

/* taskbar */
.taskbar {
    display: flex;
    justify-content: space-between;
    height: 40px;
    flex: none;
    background: linear-gradient(to left, #2a0f0b, #1f0b0c 40%, #230b0b);
}

.apps {
    display: flex;
    gap: 1px;
}

.app {
    position: relative;
    width: 48px;
    height: 40px;
}

.app.active {
    background: #4a1012;
}

.app.open::after {
    content: '';
    position: absolute;
    left: 4px;
    right: 4px;
    bottom: 0;
    height: 2px;
    background: #f3a09a;
}

.app.active::after {
    left: 0;
    right: 0;
}

.tray {
    display: flex;
    align-items: stretch;
    gap: 9px;
}

.news {
    margin-left: 10px;
}

.clock {
    flex-direction: column;
    width: 46px;
    font-size: 12px;
    line-height: 17px;
    white-space: nowrap;
}

.notify {
    margin-right: 5px;
}

.show-desktop {
    width: 5px;
    margin-right: 11px;
    border-right: 1px solid #8a7a78;
}
```
